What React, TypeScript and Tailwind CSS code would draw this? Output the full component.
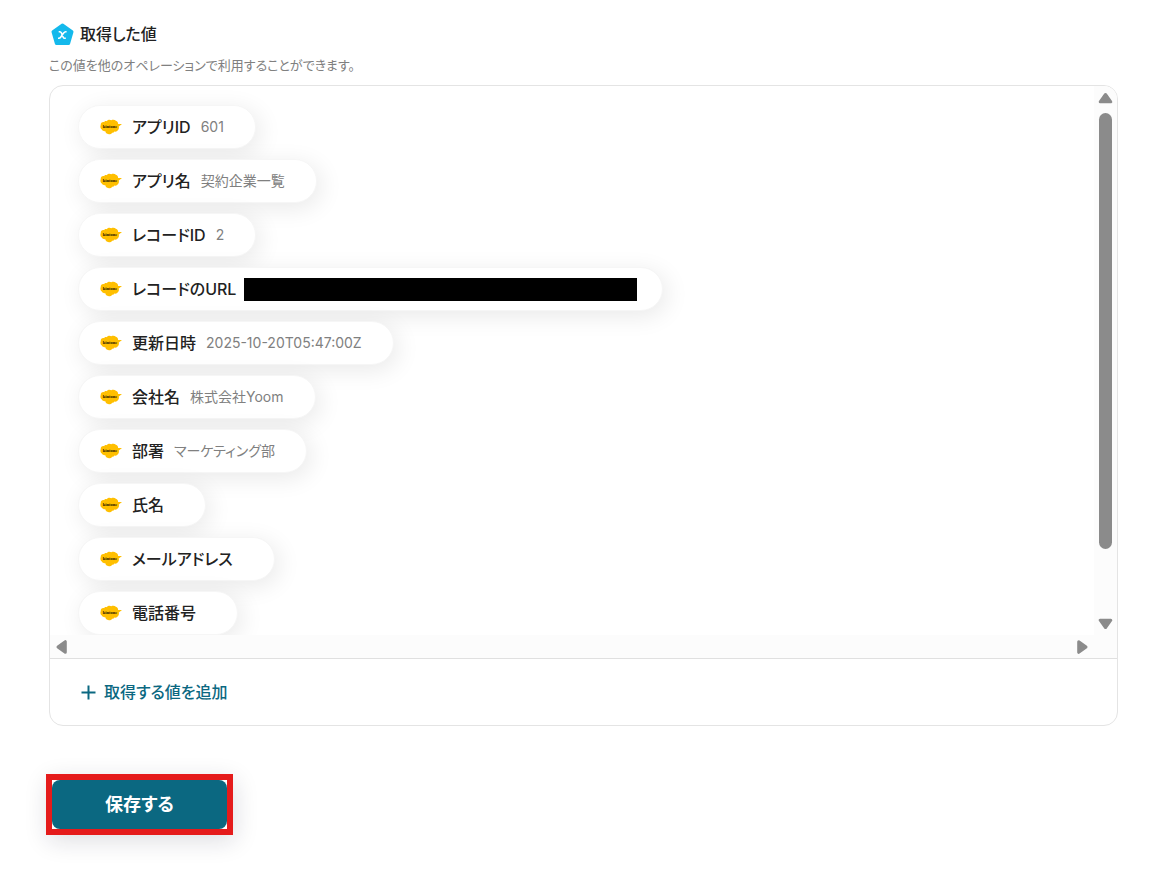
/**
 * 取得した値パネル
 *
 * - 取得した値の一覧（スクロール領域）
 * - 取得する値を追加
 * - 保存する
 */

interface OutputValue {
  label: string;
  value?: string;
  masked?: boolean;
}

const OUTPUT_VALUES: OutputValue[] = [
  { label: 'アプリID', value: '601' },
  { label: 'アプリ名', value: '契約企業一覧' },
  { label: 'レコードID', value: '2' },
  { label: 'レコードのURL', masked: true },
  { label: '更新日時', value: '2025-10-20T05:47:00Z' },
  { label: '会社名', value: '株式会社Yoom' },
  { label: '部署', value: 'マーケティング部' },
  { label: '氏名' },
  { label: 'メールアドレス' },
  { label: '電話番号' },
];

export default function App() {
  return (
    <main className="min-h-screen bg-white pt-6 pr-[53px] pb-[35px] pl-[49px] font-['Inter','Noto_Sans_CJK_JP',sans-serif] text-[#222222] [font-feature-settings:'palt']">
      <header className="flex h-5 items-center gap-[6px] pl-[2px]">
        <VariableIcon />
        <h1 className="text-[16px] leading-5 font-medium">取得した値</h1>
      </header>
      <p className="mt-[11px] text-[13px] leading-5 text-[#808080]">
        この値を他のオペレーションで利用することができます。
      </p>

      <section className="mt-[10px] overflow-hidden rounded-[14px] border border-[#e4e4e4]">
        <div className="grid grid-cols-[1fr_23px] grid-rows-[549px_23px] border-b border-[#e0e0e0]">
          <ul className="flex flex-col items-start gap-[10px] overflow-hidden pt-[19px] pl-7">
            {OUTPUT_VALUES.map((item) => (
              <ValueChip key={item.label} item={item} />
            ))}
          </ul>

          {/* 縦スクロールバー */}
          <div className="row-span-2 flex flex-col items-center bg-[#fcfcfc] pt-[6px] pb-[28px]">
            <ArrowButton label="上へスクロール" />
            <div className="mt-[9px] h-[436px] w-[13px] rounded-full bg-[#8b8b8b]" />
            <ArrowButton label="下へスクロール" className="mt-auto rotate-180" />
          </div>

          {/* 横スクロールバー */}
          <div className="flex items-center justify-between bg-[#fcfcfc] px-1">
            <ArrowButton label="左へスクロール" className="-rotate-90" />
            <ArrowButton label="右へスクロール" className="rotate-90" />
          </div>
        </div>

        <div className="flex h-[66px] items-center pl-[31px]">
          <button type="button" className="flex items-center gap-2 text-[16px] leading-6 font-medium text-[#0b6881]">
            <svg width="15" height="15" viewBox="0 0 15 15" fill="none" stroke="currentColor" strokeWidth="2" aria-hidden="true">
              <path d="M7.5 0.5v14M0.5 7.5h14" />
            </svg>
            取得する値を追加
          </button>
        </div>
      </section>

      <div className="mt-12 -ml-[3px] inline-block border-[6px] border-[#e51b1b] shadow-[2px_6px_24px_rgba(20,20,50,0.14)]">
        <button
          type="button"
          className="block h-[49px] w-[175px] rounded-[8px] bg-[#0b6881] text-[18px] leading-6 font-bold text-white"
        >
          保存する
        </button>
      </div>
    </main>
  );
}

function ValueChip({ item }: { item: OutputValue }) {
  return (
    <li
      className={`flex h-11 shrink-0 items-center rounded-full border border-[#f6f6f6] bg-white pl-[21px] shadow-[4px_5px_24px_rgba(0,0,0,0.09)] ${
        item.masked ? 'gap-2 pr-[25px]' : 'gap-[10px] pr-[31px]'
      }`}
    >
      <span className="flex items-center gap-[10px]">
        <KintoneIcon />
        <span className="text-[16px] leading-6 font-medium">{item.label}</span>
      </span>
      {item.masked ? (
        <span className="h-[23px] w-[393px] bg-black" />
      ) : (
        <span className="text-[14px] leading-6 text-[#808080]">{item.value}</span>
      )}
    </li>
  );
}

function ArrowButton({ label, className = '' }: { label: string; className?: string }) {
  return (
    <button type="button" aria-label={label} className={`block ${className}`}>
      <svg width="15" height="12" viewBox="0 0 15 12" aria-hidden="true">
        <path
          d="M7.5 2.5 12.8 9.8H2.2Z"
          fill="#8b8b8b"
          stroke="#8b8b8b"
          strokeWidth="3"
          strokeLinejoin="round"
        />
      </svg>
    </button>
  );
}

function VariableIcon() {
  return (
    <svg width="23" height="23" viewBox="0 0 23 23" aria-hidden="true">
      <path
        d="M11.5 2 21 8.8 17.6 20.5H5.4L2 8.8Z"
        fill="#14b9ec"
        stroke="#14b9ec"
        strokeWidth="3"
        strokeLinejoin="round"
      />
      <path
        d="M7.7 8.7h1.1c.8 0 1.2.4 1.5 1.1l1.9 4.4c.3.7.7 1.1 1.5 1.1h1.1M15.600 8.700h-.9c-.8 0-1.400.4-2 1.200l-2.900 4.100c-.6.8-1.200 1.200-1.900 1.200h-.9"
        fill="none"
        stroke="#ffffff"
        strokeWidth="1.6"
      />
    </svg>
  );
}

function KintoneIcon() {
  return (
    <svg width="22" height="16" viewBox="0 0 22 16" aria-hidden="true">
      <path
        d="M1.8 10.6C.4 9.600 0 7.600.700 6 .500 4.200 2.200 2.700 4.100 3.200 4.500 2.200 5.700 1.800 6.700 2.200 7.700.500 9.900.200 11.300 1.300c1.500-.8 3.400-.6 4.600.5 1.500.5 2.300 1.700 2.200 3.200L22 5l-3.200 2.600c.5 1.600-.1 3.500-1.700 4.300-.7.7-1.700.9-2.600.6-.5.900-1.400 1.300-2.300 1.200-1.100 1.700-3.700 2.200-5.300.9-.9-.6-1.500-1.400-1.500-2.400-1.500.3-2.900-.3-3.600-1.600Z"
        fill="#ffbf00"
      />
      <text
        x="10"
        y="9"
        textAnchor="middle"
        fontFamily="Liberation Serif, serif"
        fontSize="4.500"
        fontWeight="700"
        fill="#1a1200"
      >
        kintone
      </text>
    </svg>
  );
}
